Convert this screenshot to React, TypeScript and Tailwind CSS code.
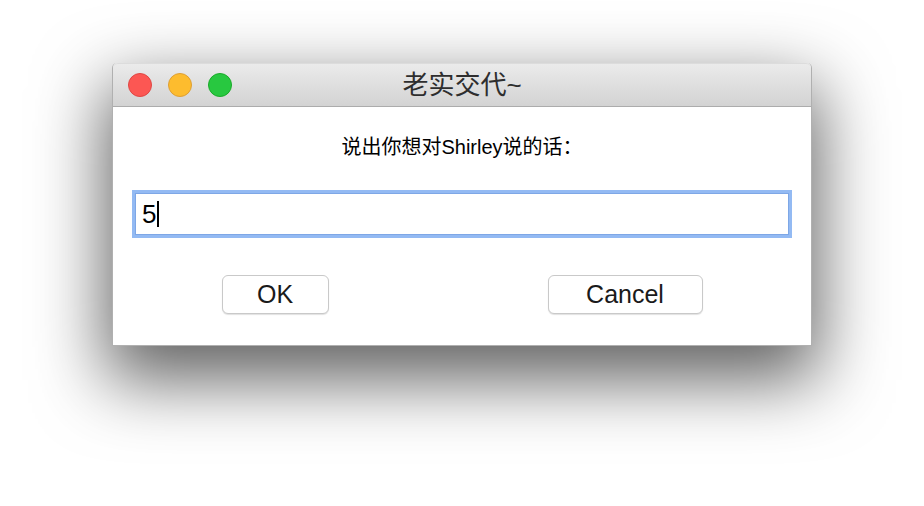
export default function App() {
  return (
    <div
      className="w-[924px] h-[506px] bg-white pt-[63px] pl-[112px]"
      style={{ fontFamily: '"Liberation Sans", "Noto Sans CJK SC", sans-serif' }}
    >
      <div className="w-[700px] h-[283px] flex flex-col bg-white rounded-t-[5px] shadow-[0_28px_70px_6px_rgba(0,0,0,0.62)] border-x border-b border-[#b0b0b0]">
        {/* title bar */}
        <div className="h-[44px] shrink-0 grid grid-cols-[1fr_auto_1fr] items-center rounded-t-[5px] border-t border-[#dcdcdc] border-b border-b-[#acacac] bg-gradient-to-b from-[#ebebeb] to-[#d3d3d3]">
          <div className="flex items-center gap-[16px] pl-[15px]">
            <span className="w-[24px] h-[24px] rounded-full bg-[#fc5753] border border-[#df4744]" />
            <span className="w-[24px] h-[24px] rounded-full bg-[#fdbc2e] border border-[#de9f34]" />
            <span className="w-[24px] h-[24px] rounded-full bg-[#28c840] border border-[#1aab29]" />
          </div>
          <div className="text-[26px] leading-none text-[#2e2e2e] -mt-[1px]">老实交代~</div>
          <div />
        </div>

        {/* body */}
        <div className="flex-1 flex flex-col items-center pt-[26px]">
          <div className="text-[20px] leading-[28px] text-black">说出你想对Shirley说的话：</div>

          <div className="mt-[29px] w-[660px] h-[48px] border-[3px] border-[#93baf3] shadow-[inset_0_0_0_1px_#7ea7e6] flex items-center pl-[7px] bg-white">
            <span className="text-[26px] leading-none text-black">5</span>
            <span className="w-[2px] h-[26px] bg-black ml-[1px]" />
          </div>

          <div className="mt-[37px] flex justify-center gap-[219px]">
            <button className="w-[107px] h-[39px] rounded-[6px] bg-white border border-[#c9c9c9] shadow-[0_1px_1px_rgba(0,0,0,0.12)] text-[25px] leading-none text-[#1a1a1a]">
              OK
            </button>
            <button className="w-[155px] h-[39px] rounded-[6px] bg-white border border-[#c9c9c9] shadow-[0_1px_1px_rgba(0,0,0,0.12)] text-[25px] leading-none text-[#1a1a1a]">
              Cancel
            </button>
          </div>
        </div>
      </div>
    </div>
  );
}
